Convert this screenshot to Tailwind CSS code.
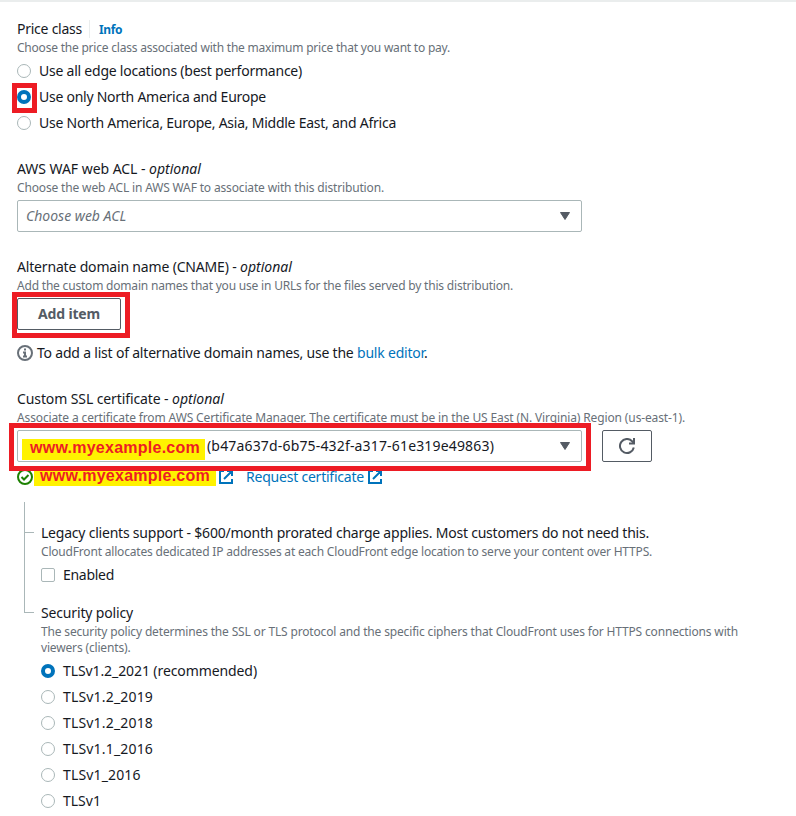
<!DOCTYPE html>
<html lang="en">
<head>
<meta charset="utf-8">
<title>Distribution settings</title>
<script src="https://cdn.jsdelivr.net/npm/@tailwindcss/browser@4"></script>
</head>
<body class="bg-white">
<main class="relative w-[796px] h-[816px] overflow-hidden border-t-2 border-[#eaeded] pl-[17px] pt-4 font-['Noto_Sans','Open_Sans',sans-serif] text-[14px] leading-[22px] text-[#16191f] whitespace-nowrap">

  <section>
    <div class="flex items-center h-[22px]">
      <h2 class="tracking-[-0.247px]">Price class</h2>
      <a class="ml-[7px] border-l border-[#eaeded] pl-[9px] h-[18px] leading-[20px] text-[12px] font-bold tracking-[-0.4px] text-[#0073bb]">Info</a>
    </div>
    <p class="text-[12px] leading-4 text-[#687078] tracking-[-0.215px]">Choose the price class associated with the maximum price that you want to pay.</p>
    <div class="flex flex-col gap-1 pt-1">
      <label class="flex items-center gap-2"><span class="size-[14px] rounded-full border border-[#aab7b8]"></span><span class="tracking-[-0.232px]">Use all edge locations (best performance)</span></label>
      <label class="flex items-center gap-2"><span class="size-[14px] rounded-full border-[4px] border-[#0073bb]"></span><span class="tracking-[-0.256px]">Use only North America and Europe</span></label>
      <label class="flex items-center gap-2"><span class="size-[14px] rounded-full border border-[#aab7b8]"></span><span class="tracking-[-0.246px]">Use North America, Europe, Asia, Middle East, and Africa</span></label>
    </div>
  </section>

  <section class="mt-6">
    <h2 class="tracking-[-0.046px]">AWS WAF web ACL - <i class="tracking-normal">optional</i></h2>
    <p class="text-[12px] leading-4 text-[#687078] tracking-[-0.154px]">Choose the web ACL in AWS WAF to associate with this distribution.</p>
    <div class="mt-1 flex items-center justify-between w-[565px] h-8 rounded-[2px] border border-[#aab7b8] pl-2 pr-[11px]">
      <i class="text-[#687078]">Choose web ACL</i>
      <svg class="w-[10px] h-2" viewBox="0 0 10 8" fill="#545b64" stroke="#545b64" stroke-linejoin="round"><path d="M.5.5h9L5 7.5z"/></svg>
    </div>
  </section>

  <section class="mt-6">
    <h2 class="tracking-[-0.173px]">Alternate domain name (CNAME) - <i class="tracking-normal">optional</i></h2>
    <p class="text-[12px] leading-4 text-[#687078] tracking-[-0.197px]">Add the custom domain names that you use in URLs for the files served by this distribution.</p>
    <button class="mt-1 flex items-center justify-center w-[104px] h-8 rounded-[2px] border border-[#545b64] font-bold tracking-[-0.162px] text-[#545b64]">Add item</button>
    <div class="mt-3 flex items-center">
      <svg class="size-4 mr-1" viewBox="0 0 16 16" fill="none" stroke="#687078" stroke-width="2"><circle cx="8" cy="8" r="7"/><path d="M8 3.5v2M6 7.5h2V12M6 11.5h4"/></svg>
      <p class="tracking-[-0.203px]">To add a list of alternative domain names, use the <a class="text-[#0073bb]">bulk editor</a>.</p>
    </div>
  </section>

  <section class="mt-6">
    <h2 class="tracking-[-0.104px]">Custom SSL certificate - <i class="tracking-normal">optional</i></h2>
    <p class="text-[12px] leading-4 text-[#687078] tracking-[-0.131px]">Associate a certificate from AWS Certificate Manager. The certificate must be in the US East (N. Virginia) Region (us-east-1).</p>
    <div class="mt-1 flex gap-5">
      <div class="flex items-center w-[565px] h-8 rounded-[2px] border border-[#aab7b8] pl-1 pr-[11px]">
        <mark class="relative top-[3px] w-[183px] h-[21px] bg-[#fff200] pl-[8px] leading-[18px] font-['Liberation_Sans',Arial,sans-serif] text-[16px] font-bold tracking-[0.253px] text-[#ed1c24]">www.myexample.com</mark>
        <span class="ml-[2px] tracking-[0.164px]">(b47a637d-6b75-432f-a317-61e319e49863)</span>
        <svg class="ml-auto w-[10px] h-2" viewBox="0 0 10 8" fill="#545b64" stroke="#545b64" stroke-linejoin="round"><path d="M.5.5h9L5 7.5z"/></svg>
      </div>
      <button class="flex items-center justify-center w-[50px] h-8 rounded-[2px] border border-[#545b64]" aria-label="Refresh">
        <svg class="size-4" viewBox="0 0 16 16" fill="none" stroke="#545b64" stroke-width="2"><path d="M14.8 9.5A7 7 0 1 1 13.2 3.3L15 5.2"/><path d="M15 0v5.5H10"/></svg>
      </button>
    </div>
    <div class="mt-1 flex items-center h-[22px]">
      <svg class="size-4" viewBox="0 0 16 16" fill="none" stroke="#1d8102" stroke-width="2"><circle cx="8" cy="8" r="7"/><path d="M4.5 8l2.5 2.5 4.5-4.5"/></svg>
      <mark class="ml-px w-[182px] h-[20px] -mt-[3px] bg-[#fff200] pl-[6px] leading-[19px] font-['Liberation_Sans',Arial,sans-serif] text-[16px] font-bold tracking-[0.253px] text-[#ed1c24]">www.myexample.com</mark>
      <svg class="size-[14px] ml-[3px]" viewBox="0 0 14 14" fill="none" stroke="#0073bb" stroke-width="2"><path d="M5 1H1v12h12V9M8 1h5v5M13 1L5 9"/></svg>
      <a class="ml-[13px] tracking-[-0.22px] text-[#0073bb]">Request certificate</a>
      <svg class="size-[14px] ml-1" viewBox="0 0 14 14" fill="none" stroke="#0073bb" stroke-width="2"><path d="M5 1H1v12h12V9M8 1h5v5M13 1L5 9"/></svg>
    </div>
  </section>

  <div class="ml-[7px] mt-[14px] flex">
    <div class="w-[10px] h-[111px] shrink-0 border-l border-b border-[#aab7b8]"><div class="h-[31px] border-b border-[#aab7b8]"></div></div>
    <div class="ml-[7px] pt-5">
      <section>
        <h2 class="tracking-[-0.218px]">Legacy clients support - $600/month prorated charge applies. Most customers do not need this.</h2>
        <p class="text-[12px] leading-4 text-[#687078] tracking-[-0.19px]">CloudFront allocates dedicated IP addresses at each CloudFront edge location to serve your content over HTTPS.</p>
        <label class="mt-1 flex items-center gap-2"><span class="size-[14px] rounded-[2px] border border-[#aab7b8]"></span><span class="tracking-[-0.288px]">Enabled</span></label>
      </section>
      <section class="mt-4">
        <h2 class="tracking-[-0.156px]">Security policy</h2>
        <p class="text-[12px] leading-4 text-[#687078] tracking-[-0.162px]">The security policy determines the SSL or TLS protocol and the specific ciphers that CloudFront uses for HTTPS connections with<br>viewers (clients).</p>
        <div class="mt-1 flex flex-col gap-1">
          <label class="flex items-center gap-2"><span class="size-[14px] rounded-full border-[4px] border-[#0073bb]"></span><span class="tracking-[-0.093px]">TLSv1.2_2021 (recommended)</span></label>
          <label class="flex items-center gap-2"><span class="size-[14px] rounded-full border border-[#aab7b8]"></span><span class="tracking-[0.172px]">TLSv1.2_2019</span></label>
          <label class="flex items-center gap-2"><span class="size-[14px] rounded-full border border-[#aab7b8]"></span><span class="tracking-[0.172px]">TLSv1.2_2018</span></label>
          <label class="flex items-center gap-2"><span class="size-[14px] rounded-full border border-[#aab7b8]"></span><span class="tracking-[0.172px]">TLSv1.1_2016</span></label>
          <label class="flex items-center gap-2"><span class="size-[14px] rounded-full border border-[#aab7b8]"></span><span class="tracking-[0.15px]">TLSv1_2016</span></label>
          <label class="flex items-center gap-2"><span class="size-[14px] rounded-full border border-[#aab7b8]"></span><span>TLSv1</span></label>
        </div>
      </section>
    </div>
  </div>

  <!-- Red callout frames over the form -->
  <div class="absolute left-[12px] top-[81px] w-[25px] h-[30px] border-[5px] border-[#ed1c24]"></div>
  <div class="absolute left-[12px] top-[290px] w-[118px] h-[46px] border-[5px] border-[#ed1c24]"></div>
  <div class="absolute left-[9px] top-[421px] w-[582px] h-[48px] border-[5px] border-[#ed1c24]"></div>
</main>
</body>
</html>
